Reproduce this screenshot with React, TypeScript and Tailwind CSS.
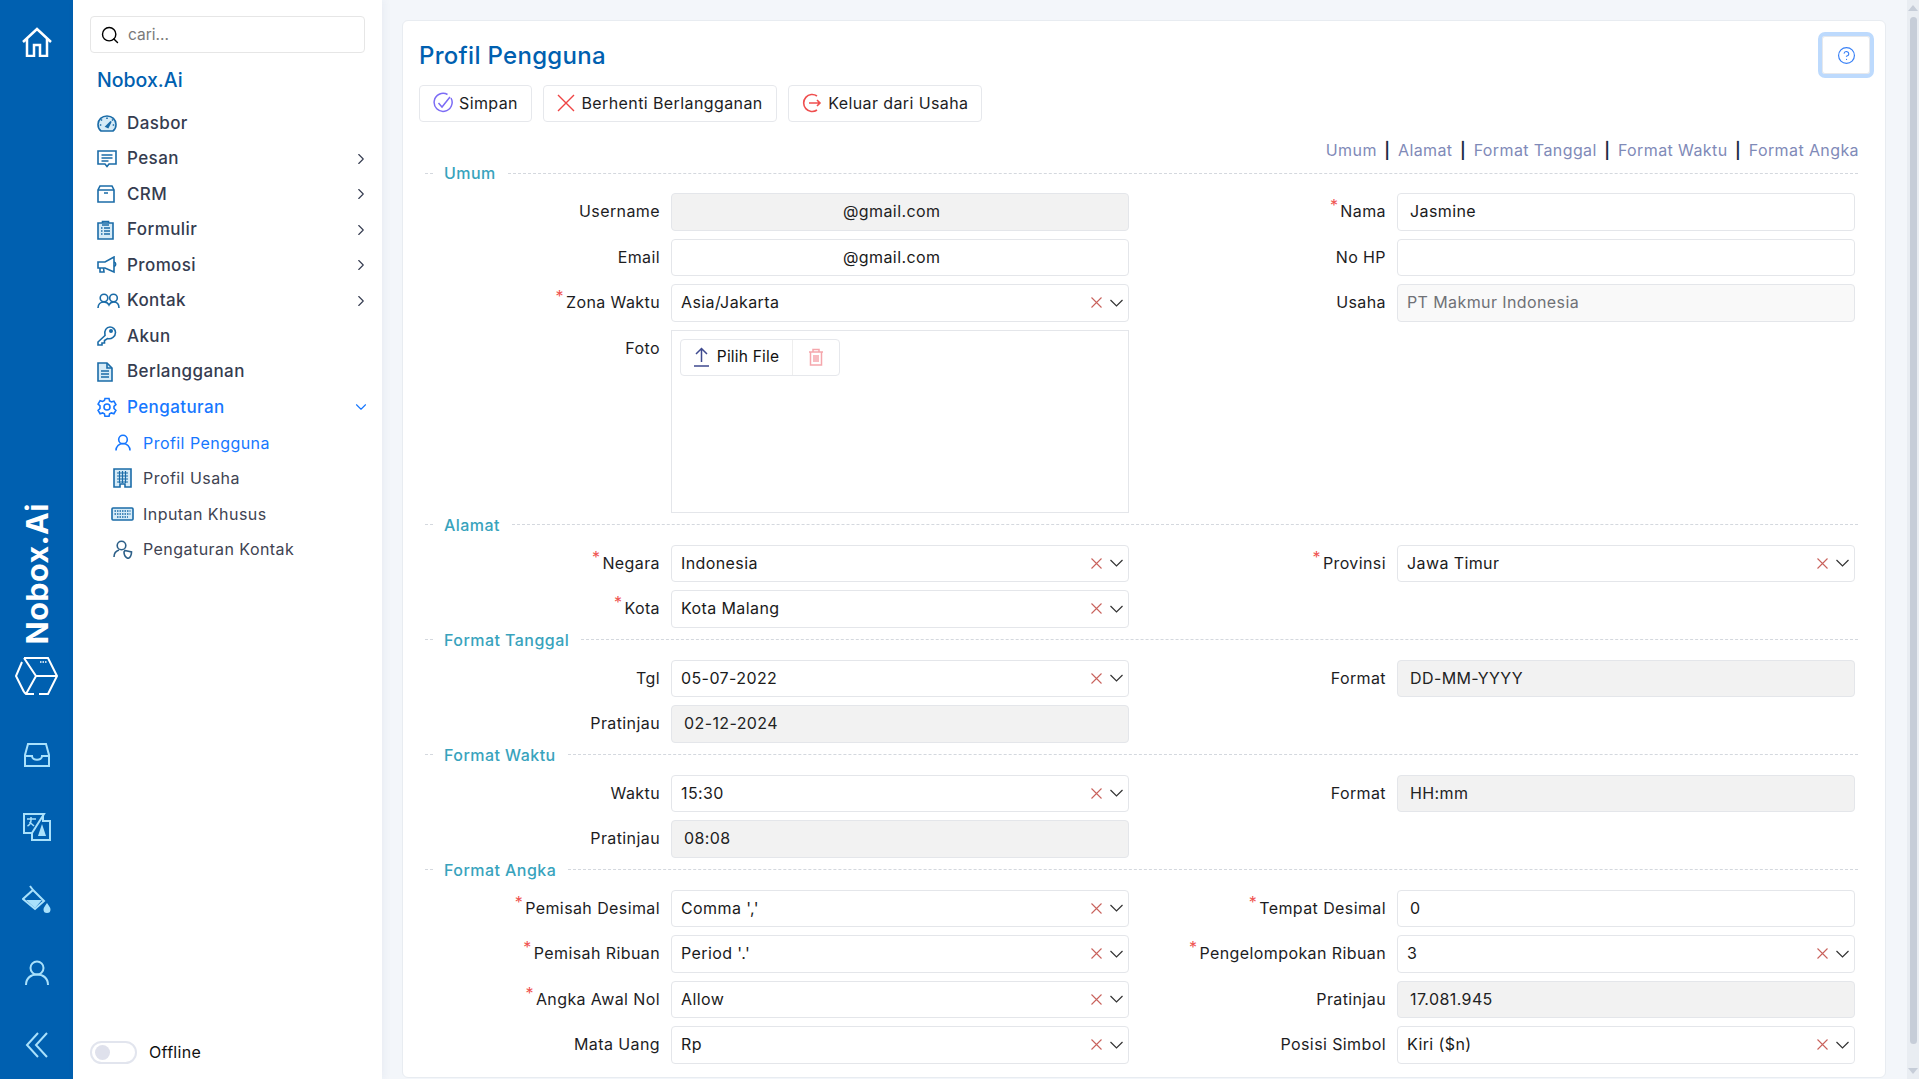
import { ChevronDown, ChevronRight, CircleHelp, Search } from "lucide-react";
import type { ReactNode } from "react";

const FONT = "font-['Inter','Liberation_Sans',sans-serif]";

function Ic({ w, h, vb, className, children }: { w: number; h: number; vb: string; className?: string; children: ReactNode }) {
  return (
    <svg width={w} height={h} viewBox={vb} fill="none" stroke="currentColor" strokeWidth={1.6} className={className}>
      {children}
    </svg>
  );
}

// two tone side menu icons
const tone = "#d6ebf7";

const menuIcons: Record<string, ReactNode> = {
  Dasbor: (
    <Ic w={20} h={17} vb="0 0 20 17" className="text-[#1b6ca8]">
      <path d="M4 16h12c2-1.500 3-3.700 3-6.500C19 4.500 15 1 10 1S1 4.500 1 9.500C1 12.300 2 14.500 4 16z" fill={tone} />
      <path d="M4 4.500 5 5.500M16 4.500 15 5.500M10 2.500V4M2.800 10h1.500M15.700 10h1.500" />
      <path d="M9 11.500 14 6.500 11 12.500z" fill="currentColor" />
    </Ic>
  ),
  Pesan: (
    <Ic w={20} h={18} vb="0 0 20 18" className="text-[#1b6ca8]">
      <path d="M1 1h18v13h-7l-2 2.500L8 14H1z" />
      <path d="M4.500 5h11M4.500 8h11M4.500 11h7" strokeWidth={1.500} />
    </Ic>
  ),
  CRM: (
    <Ic w={18} h={18} vb="0 0 18 18" className="text-[#1b6ca8]">
      <path d="M3 1h12l2 4v12H1V5z" />
      <path d="M1 5h16M7 8h4" />
    </Ic>
  ),
  Formulir: (
    <Ic w={17} h={20} vb="0 0 17 20" className="text-[#1b6ca8]">
      <path d="M1 3h15v16H1z" fill={tone} />
      <path d="M5.500 3V1.500h6V3M5 5h7" />
      <path d="M4 8h1.500M7 8h6M4 11h1.500M7 11h6M4 14h1.500M7 14h6" strokeWidth={1.300} />
    </Ic>
  ),
  Promosi: (
    <Ic w={21} h={18} vb="0 0 21 18" className="text-[#1b6ca8]">
      <path d="M1 6h7l9-5v15l-9-4H1z" />
      <path d="M3 12v4h4l-.500-4M17 6c2 .500 2.500 3.500 0 4.500" />
    </Ic>
  ),
  Kontak: (
    <Ic w={23} h={16} vb="0 0 23 16" className="text-[#1b6ca8]">
      <circle cx="7" cy="5" r="3.800" />
      <circle cx="16.500" cy="5" r="3.800" />
      <path d="M1 15c0-3.500 2.500-6 6-6 2.300 0 4 1 5 3 1-2 2.700-3 4.500-3 3.500 0 5.500 2.500 5.500 6" />
    </Ic>
  ),
  Akun: (
    <Ic w={20} h={20} vb="0 0 20 20" className="text-[#1b6ca8]">
      <path d="M8 9.500 1 16v3h4v-2h2.500v-2.500l3-2c4 1 8-2 8-6C18.500 3.500 16 1 13 1 9.500 1 6.800 4.500 8 9.500z" />
      <circle cx="14" cy="5" r="1.200" fill="currentColor" />
    </Ic>
  ),
  Berlangganan: (
    <Ic w={16} h={20} vb="0 0 16 20" className="text-[#1b6ca8]">
      <path d="M1 1h9l5 5v13H1z" fill={tone} />
      <path d="M10 1v5h5M4 9h8M4 12h8M4 15h8" />
    </Ic>
  ),
  Pengaturan: (
    <Ic w={20} h={20} vb="0 0 20 20" className="text-[#1677ff]">
      <path d="M8 1.500h4l.600 2.500 1.800 1 2.500-.800 2 3.400-1.900 1.800v2.100l1.900 1.800-2 3.400-2.500-.800-1.800 1-.600 2.500H8l-.600-2.500-1.800-1-2.500.800-2-3.400 1.900-1.800V8.900L1.100 7.100l2-3.400 2.500.800 1.800-1z" />
      <circle cx="10" cy="10" r="3" />
    </Ic>
  ),
};

const subIcons: Record<string, ReactNode> = {
  "Profil Pengguna": (
    <Ic w={16} h={17} vb="0 0 16 17" className="text-[#1677ff]">
      <circle cx="8" cy="5.500" r="4.300" />
      <path d="M1 16.500c0-4 3-7 7-7s7 3 7 7" />
    </Ic>
  ),
  "Profil Usaha": (
    <Ic w={19} h={20} vb="0 0 19 20" className="text-[#1b6ca8]">
      <path d="M1 1h17v18h-6v-3H7v3H1z" fill={tone} />
      <path d="M4 5h11M4 8h11M4 11h11M4 14h11M6.500 3v12M9.500 3v12M12.500 3v12" strokeWidth={1.200} />
    </Ic>
  ),
  "Inputan Khusus": (
    <Ic w={23} h={14} vb="0 0 23 14" className="text-[#1b6ca8]">
      <rect x="1" y="1" width="21" height="12" rx="1" fill={tone} />
      <path d="M3.500 4h16M3.500 7h16M6 10h11" strokeDasharray="1.500 1" strokeWidth={1.500} />
    </Ic>
  ),
  "Pengaturan Kontak": (
    <Ic w={20} h={19} vb="0 0 20 19" className="text-[#2c5f88]">
      <circle cx="8.500" cy="5.500" r="4.300" />
      <path d="M1 17c0-3.500 2-6 5-7M12 10.500l6.500 1.500c0 3-1 5.500-3.500 6.500-2.500-1-4-3.500-4-6.500z" />
    </Ic>
  ),
};

const mainMenu = [
  { label: "Dasbor" },
  { label: "Pesan", arrow: true },
  { label: "CRM", arrow: true },
  { label: "Formulir", arrow: true },
  { label: "Promosi", arrow: true },
  { label: "Kontak", arrow: true },
  { label: "Akun" },
  { label: "Berlangganan" },
];

function Rail() {
  return (
    <div className="w-[73px] shrink-0 bg-[#0060b0] flex flex-col items-center pt-[27px] pb-[21px]">
      <svg width="32" height="30" viewBox="0 0 32 30" fill="none" stroke="#fff" strokeWidth="2.500">
        <path d="M2 15 16 2l14 13M6 12v17h7V18h6v11h7V12" />
      </svg>
      <div className="flex-1" />
      <div className="[writing-mode:vertical-rl] rotate-180 text-white font-bold text-[30.500px] leading-[36px] tracking-[0.4px] font-['Inter',sans-serif]">Nobox.Ai</div>
      <svg width="44" height="39" viewBox="0 0 44 39" fill="none" stroke="#fff" strokeWidth="2" className="mt-[13px]">
        <path d="M9 1h24l9 18-9 18h-9M19 37h-8l-2-2M7 5 1 19l8 16M9 1l12 18 21 0M21 19 11 37" />
        <path d="M25 5h7" strokeDasharray="1.500 1" strokeWidth="1.500" />
      </svg>
      <svg width="26" height="24" viewBox="0 0 26 24" fill="none" stroke="#a9e1fb" strokeWidth="2" className="mt-[47px]">
        <path d="M4 1h18l3 11v11H1V12zM1 13h7c0 5 10 5 10 0h7" />
      </svg>
      <svg width="28" height="28" viewBox="0 0 28 28" fill="none" stroke="#a9e1fb" strokeWidth="2" className="mt-[46px]">
        <path d="M9 20H1V1h20l-12 19v7h18V8h-7l0-7" />
        <path d="M4 6h9M8 4v3c0 3-1.500 5-3.500 6M6.500 9l4.500 4" strokeWidth="1.500" />
        <path d="M19 11l4 12h-8z" fill="#a9e1fb" stroke="none" />
      </svg>
      <svg width="29" height="29" viewBox="0 0 29 29" fill="none" stroke="#a9e1fb" strokeWidth="2" className="mt-[44px]">
        <path d="M8 1l3 4M11 5l11 11-9 8-12-10z" />
        <path d="M4 15h16l-7 8z" fill="#a9e1fb" stroke="none" />
        <path d="M25 18c-2 3-3.500 4.500-3.500 6.500a3.500 3.500 0 0 0 7 0c0-2-1.500-3.500-3.500-6.500z" fill="#a9e1fb" stroke="none" />
      </svg>
      <svg width="24" height="26" viewBox="0 0 24 26" fill="none" stroke="#a9e1fb" strokeWidth="2" className="mt-[46px]">
        <circle cx="12" cy="8" r="6.500" />
        <path d="M1 25c0-7 5-10.500 11-10.500S23 18 23 25" />
      </svg>
      <svg width="24" height="26" viewBox="0 0 24 26" fill="none" stroke="#a9e1fb" strokeWidth="2" className="mt-[46px]">
        <path d="M13 1 2 13l11 12M22 1 11 13l11 12" />
      </svg>
    </div>
  );
}

function Sidebar() {
  return (
    <div className="w-[309px] shrink-0 bg-white flex flex-col shadow-[2px_0_8px_rgba(30,60,110,0.05)] z-10 pt-4 pb-[15px]">
      <div className="mx-[17px] h-[37px] border border-[#e6e6e6] rounded-[4px] flex items-center pl-[9px]">
        <Search size={20} strokeWidth={1.700} className="text-black" />
        <span className="ml-[8px] text-[15.500px] text-[#7a7a7a]">cari...</span>
      </div>
      <div className="ml-[24px] mt-[15px] text-[#0060b0] text-[19.500px] font-medium leading-[24px]">Nobox.Ai</div>
      <div className="mt-[13.500px] flex flex-col">
        {mainMenu.map((m) => (
          <div key={m.label} className="h-[35.500px] flex items-center pl-[24px] text-[#353c50] font-medium text-[17px] tracking-[0.4px]">
            <span className="w-[30px] flex justify-start">{menuIcons[m.label]}</span>
            <span className="flex-1">{m.label}</span>
            {m.arrow && <ChevronRight size={18} strokeWidth={1.500} className="mr-[12px] text-[#353c50]" />}
          </div>
        ))}
        <div className="h-[35.500px] flex items-center pl-[24px] text-[#1677ff] font-medium text-[17px] tracking-[0.4px]">
          <span className="w-[30px] flex justify-start">{menuIcons.Pengaturan}</span>
          <span className="flex-1">Pengaturan</span>
          <ChevronDown size={18} strokeWidth={1.500} className="mr-[12px]" />
        </div>
        {Object.keys(subIcons).map((label) => (
          <div
            key={label}
            className={`h-[35.500px] flex items-center pl-[37px] text-[16px] tracking-[0.45px] ${label === "Profil Pengguna" ? "text-[#1677ff]" : "text-[#404352]"}`}
          >
            <span className="w-[33px] flex justify-center pr-[8px]">{subIcons[label]}</span>
            <span>{label}</span>
          </div>
        ))}
      </div>
      <div className="mt-auto ml-[17px] flex items-center">
        <div className="w-[47px] h-[23px] rounded-full border-2 border-[#e2e5ee] flex items-center pl-[3px]">
          <div className="w-[15px] h-[15px] rounded-full bg-[#dfe1ec]" />
        </div>
        <span className="ml-[12px] text-[16px] tracking-[0.3px] text-[#111]">Offline</span>
      </div>
    </div>
  );
}

function SelectIcons() {
  return (
    <div className="flex items-center gap-[8px] pr-[5px]">
      <svg width="11" height="11" viewBox="0 0 11 11" fill="none" stroke="#c9625c" strokeWidth="1.100">
        <path d="m.5.5 10 10m0-10-10 10" />
      </svg>
      <svg width="13" height="8" viewBox="0 0 13 8" fill="none" stroke="#333" strokeWidth="1.200">
        <path d="m.5 1 6 6 6-6" />
      </svg>
    </div>
  );
}

type FieldProps = {
  label: string;
  required?: boolean;
  value?: string;
  select?: boolean;
  disabled?: boolean;
  muted?: boolean;
  pad?: string;
};

function Field({ label, required, value, select, disabled, muted, pad }: FieldProps) {
  return (
    <div className="flex items-center h-[37.500px]">
      <div className="w-[229px] mr-[11px] pb-px text-right text-[16px] text-[#1d1d1f] tracking-[0.4px] whitespace-nowrap">
        {required && <sup className="text-[#ef5350] text-[16px] top-[-6px] mr-[2px]">*</sup>}
        {label}
      </div>
      <div
        className={`flex-1 h-full flex items-center border border-[#e4e6ea] rounded-[4px] text-[16px] tracking-[0.4px] ${
          disabled ? (muted ? "bg-[#f9f9f9] text-[#6f7176]" : "bg-[#f2f2f2] text-[#222]") : "bg-white text-[#1a1a1a]"
        } ${pad ?? (select ? "pl-[9px]" : "pl-[12px]")}`}
      >
        <span className="flex-1 pb-px">{value}</span>
        {select && <SelectIcons />}
      </div>
    </div>
  );
}

function SectionTitle({ title }: { title: string }) {
  return (
    <div className="mt-[2px] mb-[10px] h-5 ml-[6px] mr-[11px] flex items-center">
      <div className="w-[8px] border-t border-dashed border-[#d4d8de]" />
      <span className="ml-[11px] mr-[12px] text-[16px] font-medium tracking-[0.45px] text-[#38a3bd]">{title}</span>
      <div className="flex-1 border-t border-dashed border-[#d4d8de]" />
    </div>
  );
}

function FormGrid({ children }: { children: ReactNode }) {
  return <div className="grid grid-cols-[698px_698px] gap-x-[28px] gap-y-2 ml-[12px]">{children}</div>;
}

function HeaderButton({ icon, label }: { icon: ReactNode; label: string }) {
  return (
    <div className="h-[37px] flex items-center gap-[6px] px-[13px] pb-px border border-[#e6e8ec] rounded-[4px] text-[16px] tracking-[0.4px] text-[#1d1d1f]">
      {icon}
      {label}
    </div>
  );
}

const anchors = ["Umum", "Alamat", "Format Tanggal", "Format Waktu", "Format Angka"];

function ProfileCard() {
  return (
    <div className="ml-5 mr-[21px] mt-5 mb-px flex-1 overflow-hidden bg-white border border-[#e8ecf1] rounded-[6px] px-4 pt-[17px]">
      <div className="flex items-start justify-between h-[36px]">
        <h1 className="text-[24px] leading-[36px] font-medium text-[#0060b0] tracking-[0.3px]">Profil Pengguna</h1>
        <div className="mt-[-6px] mr-[-5px] w-[56px] h-[46px] rounded-[7px] border-[4px] border-[#bddafd] flex items-center justify-center bg-white shadow-[inset_0_0_0_1px_#e6e8ec]">
          <CircleHelp size={19} strokeWidth={1.500} className="text-[#3b82f6]" />
        </div>
      </div>
      <div className="mt-[11px] flex gap-[11.500px]">
        <HeaderButton
          label="Simpan"
          icon={
            <svg width="20" height="22" viewBox="0 0 20 22" fill="none" stroke="#7c6cf5" strokeWidth="1.500">
              <path d="M18 6a9 9 0 1 1-3.500-3.500" />
              <path d="m5.500 11 3.500 4 8-10" />
            </svg>
          }
        />
        <HeaderButton
          label="Berhenti Berlangganan"
          icon={
            <svg width="18" height="18" viewBox="0 0 18 18" fill="none" stroke="#ef4444" strokeWidth="1.400">
              <path d="m1 1 16 16m0-16L1 17" />
            </svg>
          }
        />
        <HeaderButton
          label="Keluar dari Usaha"
          icon={
            <svg width="20" height="22" viewBox="0 0 20 22" fill="none" stroke="#ef4f4f" strokeWidth="1.600">
              <path d="M15 4a8.500 8.500 0 1 0 0 14" />
              <path d="M7 11h11m-3-3 3 3-3 3" />
            </svg>
          }
        />
      </div>
      <div className="mt-[16px] -mb-px h-[24px] mr-[10px] flex justify-end items-center text-[16px] text-[#7f8ab8] tracking-[0.4px]">
        {anchors.map((a, i) => (
          <span key={a} className="flex items-center">
            {i > 0 && <span className="mx-[7.500px] text-[#1c2a44] font-semibold">|</span>}
            {a}
          </span>
        ))}
      </div>

      <SectionTitle title="Umum" />
      <FormGrid>
        <Field label="Username" value="@gmail.com" disabled pad="pl-[171px]" />
        <Field label="Nama" required value="Jasmine" />
        <Field label="Email" value="@gmail.com" pad="pl-[171px]" />
        <Field label="No HP" />
        <Field label="Zona Waktu" required value="Asia/Jakarta" select />
        <Field label="Usaha" value="PT Makmur Indonesia" disabled muted pad="pl-[9px]" />
        <div className="flex h-[183px]">
          <div className="w-[229px] mr-[11px] text-right text-[16px] text-[#1d1d1f] tracking-[0.4px] pt-[6px]">Foto</div>
          <div className="flex-1 border border-[#e4e6ea] pl-[8px] pt-[8px]">
            <div className="w-[160px] h-[37px] border border-[#e6e8ec] rounded-[4px] flex items-center text-[15.500px] tracking-[0.2px] text-[#111]">
              <div className="w-[112px] h-full flex items-center justify-center gap-[8px] border-r border-[#eeeeee]">
                <svg width="15" height="20" viewBox="0 0 15 20" fill="none" stroke="#3f4a8f" strokeWidth="1.500">
                  <path d="M7.500 15V2M2 7l5.500-5.500L13 7M0 19h15" />
                </svg>
                Pilih File
              </div>
              <div className="flex-1 flex justify-center">
                <svg width="16" height="18" viewBox="0 0 16 18" fill="none" stroke="#f5a6ac" strokeWidth="1.500">
                  <path d="M1 4h14M5 4V1.500h6V4M2.500 4v13h11V4M6 7v7M8 7v7M10 7v7" />
                </svg>
              </div>
            </div>
          </div>
        </div>
        <div />
      </FormGrid>

      <SectionTitle title="Alamat" />
      <FormGrid>
        <Field label="Negara" required value="Indonesia" select />
        <Field label="Provinsi" required value="Jawa Timur" select />
        <Field label="Kota" required value="Kota Malang" select />
        <div />
      </FormGrid>

      <SectionTitle title="Format Tanggal" />
      <FormGrid>
        <Field label="Tgl" value="05-07-2022" select />
        <Field label="Format" value="DD-MM-YYYY" disabled />
        <Field label="Pratinjau" value="02-12-2024" disabled />
        <div />
      </FormGrid>

      <SectionTitle title="Format Waktu" />
      <FormGrid>
        <Field label="Waktu" value="15:30" select />
        <Field label="Format" value="HH:mm" disabled />
        <Field label="Pratinjau" value="08:08" disabled />
        <div />
      </FormGrid>

      <SectionTitle title="Format Angka" />
      <FormGrid>
        <Field label="Pemisah Desimal" required value="Comma ','" select />
        <Field label="Tempat Desimal" required value="0" />
        <Field label="Pemisah Ribuan" required value="Period '.'" select />
        <Field label="Pengelompokan Ribuan" required value="3" select />
        <Field label="Angka Awal Nol" required value="Allow" select />
        <Field label="Pratinjau" value="17.081.945" disabled />
        <Field label="Mata Uang" value="Rp" select />
        <Field label="Posisi Simbol" value="Kiri ($n)" select />
      </FormGrid>
    </div>
  );
}

function FakeScrollbar() {
  return (
    <div className="w-3 shrink-0 bg-[#e9edf2] flex flex-col items-center py-[5px]">
      <div className="w-0 h-0 border-x-[5px] border-x-transparent border-b-[6px] border-b-[#c6cdd8]" />
      <div className="w-[7px] flex-1 mt-[6px] mb-[24px] bg-[#c6cdd8] rounded-full" />
      <div className="w-0 h-0 border-x-[5px] border-x-transparent border-t-[6px] border-t-[#c6cdd8]" />
    </div>
  );
}

export default function App() {
  return (
    <div className={`flex h-screen w-full overflow-hidden bg-[#f3f6fa] ${FONT}`}>
      <Rail />
      <Sidebar />
      <div className="flex-1 flex flex-col min-w-0">
        <ProfileCard />
      </div>
      <FakeScrollbar />
    </div>
  );
}
